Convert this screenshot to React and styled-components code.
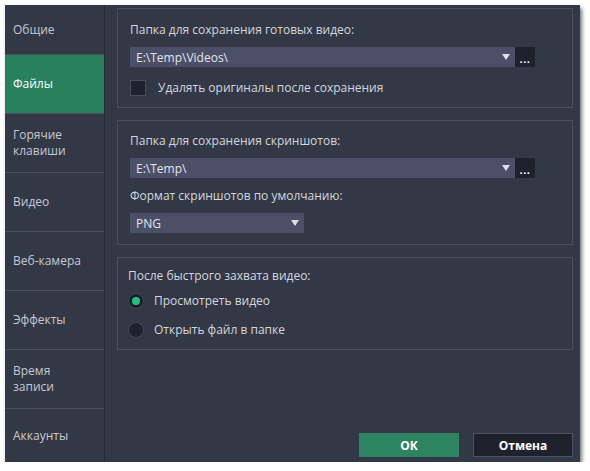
import React, { useState } from 'react';
import styled, { createGlobalStyle } from 'styled-components';

const GlobalStyle = createGlobalStyle`
  html, body {
    margin: 0;
    padding: 0;
    background: #ffffff;
  }
  body {
    font-family: "Open Sans", "Liberation Sans", sans-serif;
    font-size: 12px;
  }
`;

const Page = styled.div`
  padding: 5px 0 0 5px;
`;

const Window = styled.div`
  width: 575px;
  height: 457px;
  background: #333846;
  display: grid;
  grid-template-columns: 100px 1fr;
  box-shadow: 2px 3px 4px rgba(0, 0, 0, 0.55);
  color: #d4d7de;
`;

const Sidebar = styled.nav`
  display: flex;
  flex-direction: column;
  border-right: 1px solid #272a35;
`;

const NavItem = styled.div`
  height: ${(p) => p.h}px;
  display: flex;
  align-items: center;
  padding: 0 8px;
  line-height: 16px;
  border-bottom: ${(p) => (p.last ? 'none' : '1px solid #4a4f5f')};
  background: ${(p) => (p.active ? '#28805c' : 'transparent')};
  color: ${(p) => (p.active ? '#ffffff' : '#c6c9d1')};
  box-sizing: border-box;
  cursor: pointer;
`;

const Content = styled.main`
  display: flex;
  flex-direction: column;
  padding: 3px 7px 6px 12px;
`;

const Panel = styled.section`
  border: 1px solid #4a4f5f;
  padding: ${(p) => p.pad || '13px 12px 11px 12px'};
  margin-bottom: 12px;
  display: flex;
  flex-direction: column;
`;

const Label = styled.div`
  line-height: 16px;
  color: #d4d7de;
  margin-bottom: ${(p) => p.mb || 0}px;
`;

const Row = styled.div`
  display: flex;
  align-items: center;
  margin-bottom: ${(p) => p.mb || 0}px;
`;

const Select = styled.div`
  width: ${(p) => p.w}px;
  height: 20px;
  background: #4b5068;
  display: flex;
  align-items: center;
  justify-content: space-between;
  padding: 0 5px 0 6px;
  box-sizing: border-box;
  color: #e2e4ea;
`;

const Arrow = styled.span`
  width: 0;
  height: 0;
  border-left: 4px solid transparent;
  border-right: 4px solid transparent;
  border-top: 6px solid #dcdfe6;
`;

const Browse = styled.div`
  width: 20px;
  height: 20px;
  background: #1f222c;
  color: #ffffff;
  font-weight: bold;
  display: flex;
  align-items: flex-end;
  justify-content: center;
  font-size: 11px;
  line-height: 16px;
  letter-spacing: 0.5px;
`;

const Check = styled.span`
  width: 14px;
  height: 14px;
  border: 1px solid #494e5e;
  background: #1f222c;
  margin-right: 12px;
`;

const Radio = styled.span`
  width: 16px;
  height: 16px;
  border-radius: 50%;
  background: #1f222c;
  border: 1px solid #434858;
  box-sizing: border-box;
  display: flex;
  align-items: center;
  justify-content: center;
  margin-right: 10px;
  &::after {
    content: '';
    width: 8px;
    height: 8px;
    border-radius: 50%;
    background: ${(p) => (p.on ? '#26c07e' : 'transparent')};
  }
`;

const Footer = styled.div`
  margin-top: auto;
  display: flex;
  justify-content: flex-end;
  gap: 14px;
`;

const Button = styled.button`
  width: 100px;
  height: 24px;
  font-family: "Open Sans", "Liberation Sans", sans-serif;
  font-size: 12px;
  font-weight: bold;
  color: #ffffff;
  background: ${(p) => (p.primary ? '#2e8460' : '#1f222c')};
  border: 1px solid ${(p) => (p.primary ? '#2e8460' : '#4e5465')};
  padding: 0;
  cursor: pointer;
`;

const navItems = [
  { label: 'Общие', h: 50 },
  { label: 'Файлы', h: 59, active: true },
  { label: ['Горячие', 'клавиши'], h: 59 },
  { label: 'Видео', h: 59 },
  { label: 'Веб-камера', h: 59 },
  { label: 'Эффекты', h: 59 },
  { label: ['Время', 'записи'], h: 59 },
  { label: 'Аккаунты', h: 54, last: true },
];

export default function App() {
  const [after, setAfter] = useState(0);
  return (
    <Page>
      <GlobalStyle />
      <Window>
        <Sidebar>
          {navItems.map((n, i) => (
            <NavItem key={i} h={n.h} active={n.active} last={n.last}>
              <span>
                {Array.isArray(n.label)
                  ? n.label.map((l) => <div key={l}>{l}</div>)
                  : n.label}
              </span>
            </NavItem>
          ))}
        </Sidebar>
        <Content>
          <Panel>
            <Label mb={9}>Папка для сохранения готовых видео:</Label>
            <Row mb={12}>
              <Select w={385}>
                <span>E:\Temp\Videos\</span>
                <Arrow />
              </Select>
              <Browse>...</Browse>
            </Row>
            <Row>
              <Check />
              <span>Удалять оригиналы после сохранения</span>
            </Row>
          </Panel>
          <Panel pad="12px 12px 11px 12px">
            <Label mb={9}>Папка для сохранения скриншотов:</Label>
            <Row mb={10}>
              <Select w={385}>
                <span>E:\Temp\</span>
                <Arrow />
              </Select>
              <Browse>...</Browse>
            </Row>
            <Label mb={9}>Формат скриншотов по умолчанию:</Label>
            <Row>
              <Select w={174}>
                <span>PNG</span>
                <Arrow />
              </Select>
            </Row>
          </Panel>
          <Panel pad="10px 10px 11px 10px">
            <Label mb={8}>После быстрого захвата видео:</Label>
            <Row mb={12} onClick={() => setAfter(0)}>
              <Radio on={after === 0} />
              <span>Просмотреть видео</span>
            </Row>
            <Row onClick={() => setAfter(1)}>
              <Radio on={after === 1} />
              <span>Открыть файл в папке</span>
            </Row>
          </Panel>
          <Footer>
            <Button primary>ОК</Button>
            <Button>Отмена</Button>
          </Footer>
        </Content>
      </Window>
    </Page>
  );
}
